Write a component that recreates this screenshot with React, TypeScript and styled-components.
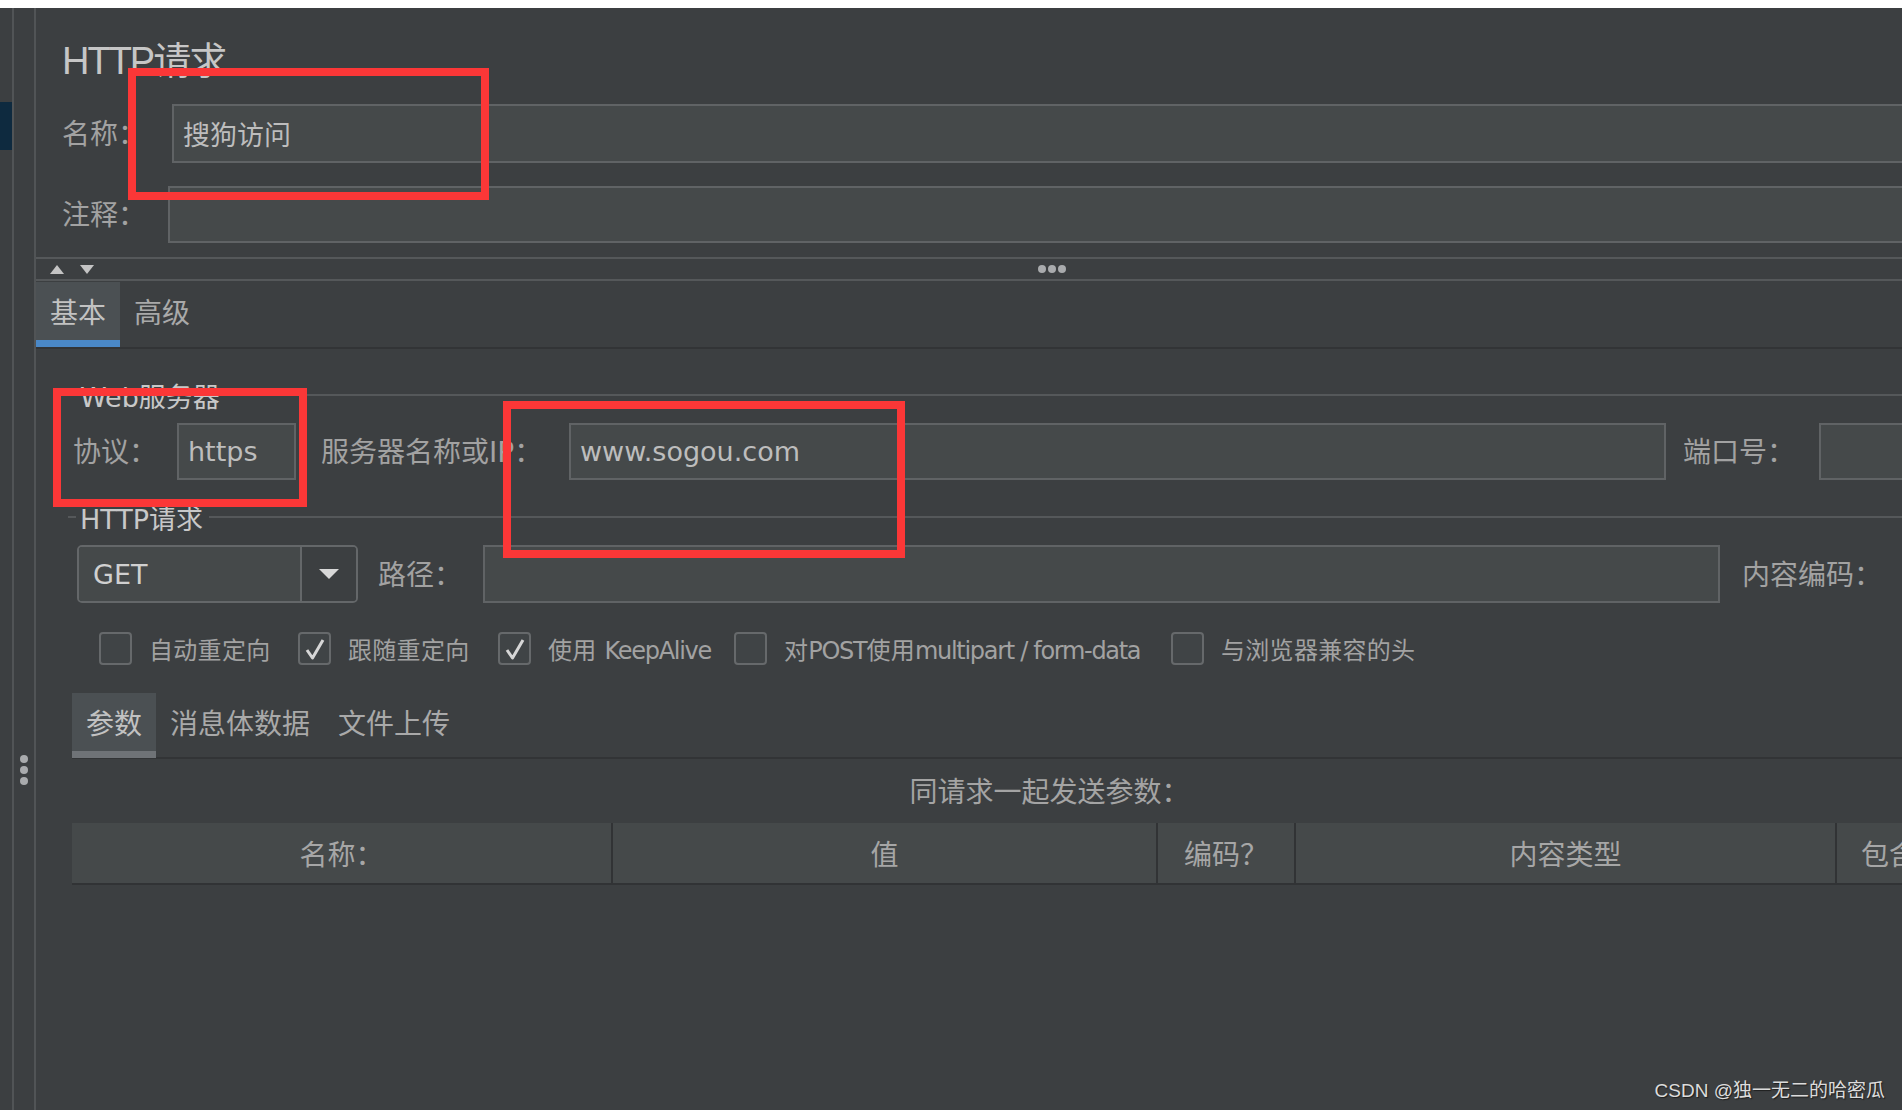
import React from 'react';
import styled, { createGlobalStyle } from 'styled-components';

const GlobalStyle = createGlobalStyle`
  html, body { margin: 0; padding: 0; background: #3c3f41; }
  body {
    font-family: "DejaVu Sans", "Noto Sans CJK SC", sans-serif;
    overflow: hidden;
  }
  * { box-sizing: border-box; }
`;

const Page = styled.div`
  position: relative;
  width: 1902px;
  height: 1110px;
  overflow: hidden;
  display: flex;
  flex-direction: column;
  background: #3c3f41;
`;

const TopStrip = styled.div`
  height: 8px;
  flex: none;
  background: #ffffff;
`;

const Body = styled.div`
  flex: 1;
  display: flex;
  min-height: 0;
`;

const SideStrip = styled.div`
  width: 12px;
  flex: none;
  padding-top: 94px;
`;

const SideMark = styled.div`
  height: 48px;
  background: #0e2a3f;
`;

const VLine = styled.div`
  width: 2px;
  flex: none;
  background: #515456;
`;

const Gutter = styled.div`
  width: 20px;
  flex: none;
  display: flex;
  flex-direction: column;
  align-items: center;
  gap: 3px;
  padding-top: 747px;
`;

const Dot = styled.span`
  width: 8px;
  height: 8px;
  border-radius: 50%;
  background: #a9abad;
`;

const Main = styled.main`
  flex: 1;
  min-width: 0;
  overflow: hidden;
`;

const Content = styled.div`
  width: 2032px;
  display: flex;
  flex-direction: column;
`;

const Header = styled.div`
  padding-left: 26px;
  display: flex;
  flex-direction: column;
`;

const Title = styled.h1`
  margin: 33px 0 0;
  height: 40px;
  font: 400 38px/40px "Liberation Sans", "Noto Sans CJK SC", sans-serif;
  letter-spacing: -2px;
  color: #c6c6c6;
`;

const FieldRow = styled.div<{ $top: number; $h: number }>`
  display: flex;
  align-items: center;
  margin-top: ${(p) => p.$top}px;
  height: ${(p) => p.$h}px;
`;

const Label = styled.span<{ $w?: number; $pad?: number }>`
  flex: none;
  ${(p) => (p.$w ? `width: ${p.$w}px;` : '')}
  padding-left: ${(p) => p.$pad ?? 0}px;
  padding-top: 3px;
  font-size: 28px;
  line-height: 32px;
  color: #a2a2a2;
  white-space: nowrap;
`;

const TextBox = styled.div`
  flex: 1;
  height: 100%;
  display: flex;
  align-items: center;
  padding-left: 9px;
  background: #45494a;
  border: 2px solid #606365;
  font-size: 27px;
  color: #bdbdbd;
  white-space: nowrap;
  overflow: hidden;
`;

const Splitter = styled.div`
  margin-top: 14px;
  height: 24px;
  border-top: 2px solid #55585a;
  border-bottom: 2px solid #55585a;
  display: grid;
  grid-template-columns: 1fr auto 1fr;
  align-items: center;
`;

const Arrows = styled.div`
  display: flex;
  gap: 16px;
  padding-left: 14px;
`;

const Dots = styled.div`
  display: flex;
  gap: 2px;
`;

const TabBar = styled.div`
  height: 68px;
  padding-top: 1px;
  display: flex;
  border-bottom: 2px solid #323436;
`;

const Tab = styled.div<{ $active?: boolean; $under: string }>`
  height: 65px;
  padding: 0 14px;
  display: flex;
  align-items: center;
  font-size: 28px;
  color: ${(p) => (p.$active ? '#c2c2c2' : '#a9a9a9')};
  background: ${(p) => (p.$active ? '#4b5053' : 'transparent')};
  border-bottom: 7px solid ${(p) => (p.$active ? p.$under : 'transparent')};
`;

const GroupTitle = styled.div<{ $top: number }>`
  margin-top: ${(p) => p.$top}px;
  height: 32px;
  padding-left: 32px;
  display: flex;
  align-items: center;
  font-size: 27px;
  color: #c8c8c8;
  white-space: nowrap;
  &::before {
    content: '';
    width: 8px;
    height: 2px;
    margin-right: 4px;
    background: #55585a;
  }
  &::after {
    content: '';
    flex: 1;
    height: 2px;
    margin-left: 6px;
    background: #55585a;
  }
`;

const GridRow = styled.div<{ $top: number; $h: number; $left: number; $cols: string }>`
  margin-top: ${(p) => p.$top}px;
  height: ${(p) => p.$h}px;
  padding-left: ${(p) => p.$left}px;
  display: grid;
  grid-template-columns: ${(p) => p.$cols};
  align-items: center;
`;

const Combo = styled.div`
  height: 100%;
  display: flex;
  border: 2px solid #646769;
  border-radius: 5px;
  overflow: hidden;
`;

const ComboValue = styled.div`
  flex: 1;
  display: flex;
  align-items: center;
  padding-left: 14px;
  background: #45494a;
  font-size: 27px;
  color: #d0d0d0;
`;

const ComboButton = styled.div`
  width: 56px;
  flex: none;
  display: flex;
  align-items: center;
  justify-content: center;
  border-left: 2px solid #646769;
  background: #3c3f41;
`;

const CheckRow = styled.div`
  margin-top: 29px;
  height: 33px;
  padding-left: 63px;
  display: flex;
  align-items: center;
`;

const CheckItem = styled.label<{ $w?: number }>`
  flex: none;
  ${(p) => (p.$w ? `width: ${p.$w}px;` : '')}
  display: flex;
  align-items: center;
  gap: 17px;
  font-size: 24px;
  color: #a2a2a2;
  white-space: nowrap;
  letter-spacing: 0.3px;
`;

const Latin = styled.span`
  letter-spacing: -1.3px;
`;

const Box = styled.span`
  width: 33px;
  height: 33px;
  flex: none;
  border: 2px solid #66696b;
  border-radius: 4px;
  background: #404446;
  display: flex;
  align-items: center;
  justify-content: center;
`;

const Params = styled.div`
  margin-top: 28px;
  margin-left: 36px;
  width: 1955px;
  display: flex;
  flex-direction: column;
`;

const SubTabBar = styled.div`
  height: 66px;
  display: flex;
  box-shadow: inset 0 -2px 0 #323436;
`;

const Caption = styled.div`
  margin-top: 18px;
  height: 32px;
  text-align: center;
  font-size: 28px;
  line-height: 32px;
  color: #a4a4a4;
`;

const TableHead = styled.div`
  margin-top: 14px;
  height: 62px;
  display: grid;
  grid-template-columns: 541px 545px 138px 541px 190px;
  background: #45494a;
  border-bottom: 2px solid #313335;
`;

const HeadCell = styled.div`
  display: flex;
  align-items: center;
  justify-content: center;
  font-size: 28px;
  color: #a6a6a6;
  border-right: 2px solid #313335;
  white-space: nowrap;
  overflow: hidden;
`;

const Marker = styled.div<{ $x: number; $y: number; $w: number; $h: number }>`
  position: absolute;
  left: ${(p) => p.$x}px;
  top: ${(p) => p.$y}px;
  width: ${(p) => p.$w}px;
  height: ${(p) => p.$h}px;
  border: 8px solid #fb3737;
  pointer-events: none;
`;

const Watermark = styled.div`
  position: absolute;
  right: 17px;
  bottom: 7px;
  font: 400 19px/24px "Liberation Sans", "Noto Sans CJK SC", sans-serif;
  color: #dcdcdc;
  text-shadow: 1px 1px 1px #1e1e1e;
`;

const Check = () => (
  <svg width="22" height="24" viewBox="0 0 22 24">
    <path d="M3 13 L8.5 21 L19 3" fill="none" stroke="#d6d6d6" strokeWidth="3" strokeLinejoin="round" />
  </svg>
);

const Up = () => (
  <svg width="14" height="9" viewBox="0 0 14 9">
    <polygon points="0,9 7,0 14,9" fill="#c4c4c4" />
  </svg>
);

const Down = () => (
  <svg width="14" height="9" viewBox="0 0 14 9">
    <polygon points="0,0 14,0 7,9" fill="#c4c4c4" />
  </svg>
);

const Caret = () => (
  <svg width="20" height="10" viewBox="0 0 20 10">
    <polygon points="0,0 20,0 10,10" fill="#d8d8d8" />
  </svg>
);

const MixedText = ({ text }: { text: string }) => (
  <>
    {text.split(/([A-Za-z][A-Za-z /\-]*[A-Za-z])/).map((part, i) =>
      /[A-Za-z]/.test(part) ? <Latin key={i}>{part}</Latin> : <React.Fragment key={i}>{part}</React.Fragment>
    )}
  </>
);

const checks: { label: string; checked: boolean; w?: number }[] = [
  { label: '自动重定向', checked: false, w: 199 },
  { label: '跟随重定向', checked: true, w: 200 },
  { label: '使用 KeepAlive', checked: true, w: 236 },
  { label: '对POST使用multipart / form-data', checked: false, w: 437 },
  { label: '与浏览器兼容的头', checked: false },
];

export default function App() {
  return (
    <>
      <GlobalStyle />
      <Page>
        <TopStrip />
        <Body>
          <SideStrip>
            <SideMark />
          </SideStrip>
          <VLine />
          <Gutter>
            <Dot />
            <Dot />
            <Dot />
          </Gutter>
          <VLine />
          <Main>
            <Content>
              <Header>
                <Title>HTTP请求</Title>
                <FieldRow $top={23} $h={59}>
                  <Label $w={110}>名称：</Label>
                  <TextBox>搜狗访问</TextBox>
                </FieldRow>
                <FieldRow $top={23} $h={57}>
                  <Label $w={106}>注释：</Label>
                  <TextBox />
                </FieldRow>
              </Header>

              <Splitter>
                <Arrows>
                  <Up />
                  <Down />
                </Arrows>
                <Dots>
                  <Dot />
                  <Dot />
                  <Dot />
                </Dots>
                <span />
              </Splitter>

              <TabBar>
                <Tab $active $under="#4a88c7">基本</Tab>
                <Tab $under="#4a88c7">高级</Tab>
              </TabBar>

              <GroupTitle $top={30}>Web服务器</GroupTitle>
              <GridRow $top={12} $h={57} $left={37} $cols="104px 119px 273px 1097px 153px 1fr">
                <Label>协议：</Label>
                <TextBox>https</TextBox>
                <Label $pad={25}>服务器名称或IP：</Label>
                <TextBox>www.sogou.com</TextBox>
                <Label $pad={17}>端口号：</Label>
                <TextBox />
              </GridRow>

              <GroupTitle $top={21}>HTTP请求</GroupTitle>
              <GridRow $top={12} $h={58} $left={41} $cols="281px 125px 1237px 1fr">
                <Combo>
                  <ComboValue>GET</ComboValue>
                  <ComboButton>
                    <Caret />
                  </ComboButton>
                </Combo>
                <Label $pad={20}>路径：</Label>
                <TextBox />
                <Label $pad={22}>内容编码：</Label>
              </GridRow>

              <CheckRow>
                {checks.map((c) => (
                  <CheckItem key={c.label} $w={c.w}>
                    <Box>{c.checked && <Check />}</Box>
                    <span>
                      <MixedText text={c.label} />
                    </span>
                  </CheckItem>
                ))}
              </CheckRow>

              <Params>
                <SubTabBar>
                  <Tab $active $under="#6f7377">参数</Tab>
                  <Tab $under="#6f7377">消息体数据</Tab>
                  <Tab $under="#6f7377">文件上传</Tab>
                </SubTabBar>
                <Caption>同请求一起发送参数：</Caption>
                <TableHead>
                  <HeadCell>名称：</HeadCell>
                  <HeadCell>值</HeadCell>
                  <HeadCell>编码？</HeadCell>
                  <HeadCell>内容类型</HeadCell>
                  <HeadCell>包含等号？</HeadCell>
                </TableHead>
              </Params>
            </Content>
          </Main>
        </Body>

        <Marker $x={128} $y={68} $w={361} $h={132} />
        <Marker $x={53} $y={388} $w={254} $h={119} />
        <Marker $x={503} $y={401} $w={402} $h={157} />
        <Watermark>CSDN @独一无二的哈密瓜</Watermark>
      </Page>
    </>
  );
}
